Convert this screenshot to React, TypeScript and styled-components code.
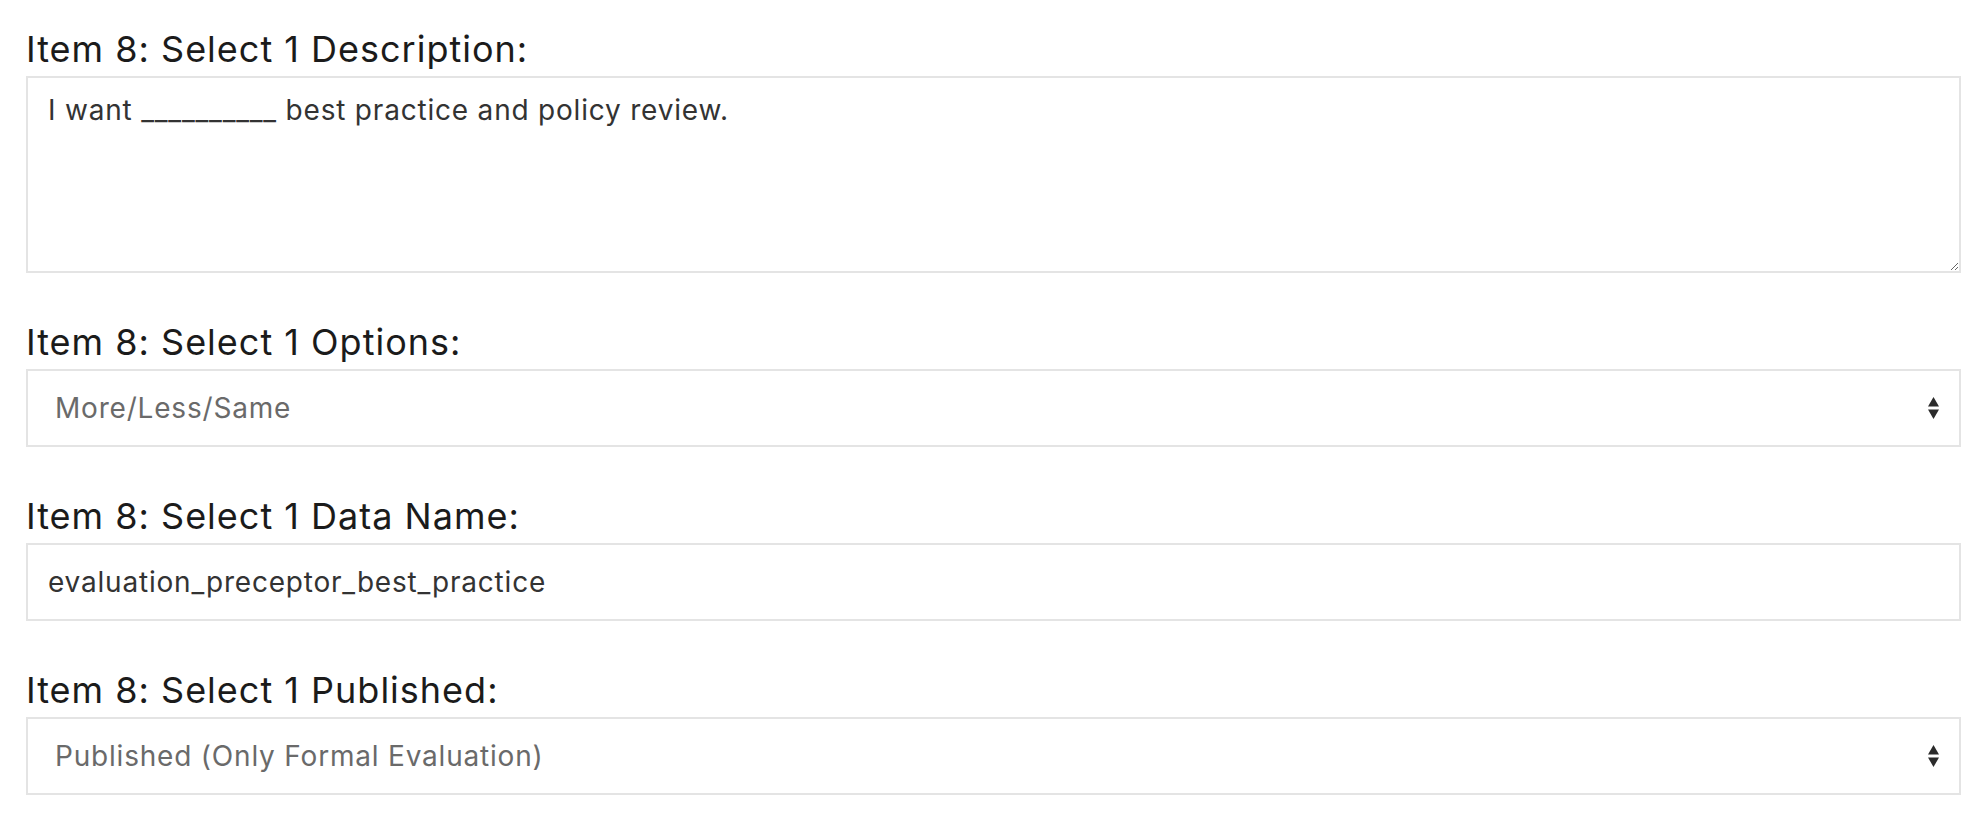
import React from 'react';
import styled, { createGlobalStyle } from 'styled-components';

const GlobalStyle = createGlobalStyle`
    html, body {
        margin: 0;
        padding: 0;
        background: #ffffff;
    }
    body {
        font-family: Inter, "Open Sans", sans-serif;
    }
`

const Form = styled.form`
    display: flex;
    flex-direction: column;
    gap: 49px;
    padding: 29px 18px 0px 26px;
`
const Field = styled.div`
    display: flex;
    flex-direction: column;
`
const Label = styled.label`
    font-family: Inter, "Open Sans", sans-serif;
    font-size: 36px;
    line-height: 40px;
    letter-spacing: 1px;
    font-weight: 400;
    color: #1b1b1b;
    margin-bottom: 7px;
`
const boxStyle = `
    box-sizing: border-box;
    width: 100%;
    border: 2px solid #e4e4e4;
    border-radius: 0px;
    background: #ffffff;
    font-family: Inter, "Open Sans", sans-serif;
    font-size: 28px;
    letter-spacing: 0.8px;
    outline: none;
    margin: 0px;
`
const TextArea = styled.textarea`
    ${boxStyle}
    height: 197px;
    padding: 14px 20px;
    line-height: 36px;
    color: #333333;
    resize: vertical;
`
const TextInput = styled.input`
    ${boxStyle}
    height: 78px;
    padding: 0px 20px;
    color: #333333;
`
const SelectWrap = styled.div`
    position: relative;
    width: 100%;
`
const Select = styled.select`
    ${boxStyle}
    height: 78px;
    padding: 0px 60px 0px 27px;
    color: #6a6a6a;
    appearance: none;
    -webkit-appearance: none;
`
const Arrows = styled.svg`
    position: absolute;
    right: 21px;
    top: 50%;
    transform: translateY(-50%);
    pointer-events: none;
`

const SortIcon = () => (
    <Arrows width="13" height="24" viewBox="0 0 13 24">
        <path d="M6.5 1 L12 10.5 L1 10.5 Z" fill="#2b2b2b" />
        <path d="M1 13.5 L12 13.5 L6.5 23 Z" fill="#2b2b2b" />
    </Arrows>
)

const App: React.FC = () => {
    return (
        <>
            <GlobalStyle />
            <Form>
                <Field>
                    <Label htmlFor="description">Item 8: Select 1 Description:</Label>
                    <TextArea
                        id="description"
                        defaultValue="I want __________ best practice and policy review."
                    />
                </Field>
                <Field>
                    <Label htmlFor="options">Item 8: Select 1 Options:</Label>
                    <SelectWrap>
                        <Select id="options" defaultValue="mls">
                            <option value="mls">More/Less/Same</option>
                            <option value="ynm">Yes/No/Maybe</option>
                        </Select>
                        <SortIcon />
                    </SelectWrap>
                </Field>
                <Field>
                    <Label htmlFor="dataname">Item 8: Select 1 Data Name:</Label>
                    <TextInput
                        id="dataname"
                        type="text"
                        defaultValue="evaluation_preceptor_best_practice"
                    />
                </Field>
                <Field>
                    <Label htmlFor="published">Item 8: Select 1 Published:</Label>
                    <SelectWrap>
                        <Select id="published" defaultValue="formal">
                            <option value="formal">Published (Only Formal Evaluation)</option>
                            <option value="all">Published</option>
                            <option value="none">Unpublished</option>
                        </Select>
                        <SortIcon />
                    </SelectWrap>
                </Field>
            </Form>
        </>
    );
}

export default App;
